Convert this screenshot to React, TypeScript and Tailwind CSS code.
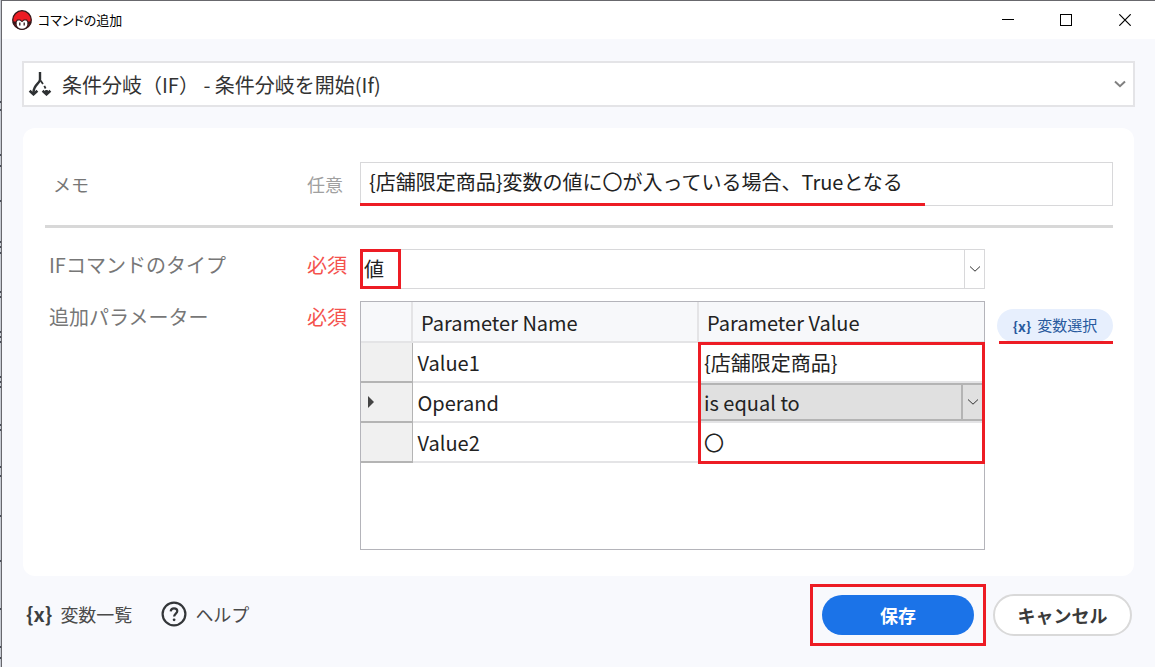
import type { ReactNode } from "react";

const parameters = [
  { name: "Value1", value: "{店舗限定商品}" },
  { name: "Operand", value: "is equal to", options: true },
  { name: "Value2", value: "〇" },
];

const edgeMarks = [101, 109, 154, 165, 200, 241, 246, 252, 291, 296, 331, 336, 341, 376, 381, 386, 424, 429, 466, 475, 515, 560, 608, 646, 657];

function Chevron({ className }: { className: string }) {
  return (
    <svg className={className} viewBox="0 0 12 8" fill="none" stroke="currentColor" aria-hidden="true">
      <path d="M1 1.5 6 6.2 11 1.5" />
    </svg>
  );
}

function Logo() {
  return (
    <svg className="h-5 w-5" viewBox="0 0 20 20" aria-hidden="true">
      <circle cx="10" cy="10" r="9.300" fill="#ed1c24" stroke="#33181a" strokeWidth="1.300" />
      <path d="M.7 11.500h3.100L5 9.600h3.300L10 11l1.700-1.400H15l1.200 1.900h3.100v1.600l-2.500 1.100C16 17.800 13.400 19.800 10 19.800S4 17.800 3.200 14.200L.7 13.100z" fill="#33181a" />
      <path d="M4.700 12 5.800 10.600h2.100L10 12.200l2.100-1.600h2.100L15.300 12v3c-.5 2.200-2.700 3.700-5.300 3.700S5.200 17.200 4.700 15z" fill="#fff" />
      <path d="M7.800 12.600v2.800M12.200 12.600v2.800" stroke="#33181a" strokeWidth="1.300" />
    </svg>
  );
}

function BranchIcon() {
  return (
    <svg className="h-6 w-6 shrink-0" viewBox="0 0 24 24" fill="none" stroke="#2e3133" strokeWidth="2" aria-hidden="true">
      <path d="M12 0v7.500C12 11.500 5.500 12.500 5.500 20.500" strokeWidth="2.400" />
      <path d="m12.500 8.500 2.500 3.500M16.300 13.800l1.300 2.700" strokeWidth="1.800" />
      <path d="M1.600 18.800 5.500 22.300l3.900-3.500M14.600 18.800l3.900 3.500 3.900-3.500M18.500 18v3.500" strokeWidth="2.600" />
    </svg>
  );
}

function Required({ children }: { children: ReactNode }) {
  return <span className="text-xl leading-8 text-[#f4524d]">{children}</span>;
}

export default function App() {
  return (
    <div className="relative flex min-h-screen bg-[#c6cad2] pl-px font-['Noto_Sans_CJK_JP',sans-serif] text-[#222]">
      <svg className="absolute top-0 left-0 h-full w-px" aria-hidden="true">
        {edgeMarks.map((y) => (
          <rect key={y} y={y} width="1" height="2" fill="#4a4f5a" />
        ))}
      </svg>
      <div className="flex min-w-0 flex-1 flex-col border-t border-l border-[#68686d] bg-[#f8f9fd]">
        <header className="flex h-[38px] items-center bg-white pl-2.5">
          <Logo />
          <h1 className="ml-1.5 flex-1 text-[13px] leading-5 text-black [font-feature-settings:'palt']">コマンドの追加</h1>
          <div className="flex text-black">
            <button type="button" aria-label="最小化" className="flex h-9 w-[58px] items-center justify-center">
              <svg className="h-3 w-3" viewBox="0 0 12 12" shapeRendering="crispEdges"><path d="M0 5.500h12" stroke="currentColor" /></svg>
            </button>
            <button type="button" aria-label="最大化" className="flex h-9 w-[58px] items-center justify-center">
              <svg className="h-3 w-3" viewBox="0 0 12 12" shapeRendering="crispEdges"><path d="M.5.500h11v11H.500z" fill="none" stroke="currentColor" /></svg>
            </button>
            <button type="button" aria-label="閉じる" className="flex h-9 w-[60px] items-center justify-center">
              <svg className="h-3 w-3" viewBox="0 0 12 12"><path d="m.3.300 11.400 11.400M11.700.300.300 11.700" stroke="currentColor" strokeWidth="1.200" /></svg>
            </button>
          </div>
        </header>

        <main className="flex flex-1 flex-col pt-[22px] pr-5 pl-5">
          <div className="relative flex h-[46px] items-center border-2 border-[#e4e4e7] bg-white pl-1">
            <BranchIcon />
            <select
              aria-label="コマンド"
              className="absolute inset-0 w-full appearance-none bg-transparent pt-0.5 pl-[38px] text-xl text-[#333] outline-none"
            >
              <option>条件分岐（IF） - 条件分岐を開始(If)</option>
            </select>
            <Chevron className="pointer-events-none absolute right-[7px] h-2 w-3 stroke-2 text-[#808080]" />
          </div>

          <section className="mx-px mt-[21px] rounded-xl bg-white pt-[34px] pr-[21px] pb-[26px] pl-[22px]">
            <div className="grid grid-cols-[262px_53px_minmax(0,1fr)] items-center">
              <label htmlFor="memo" className="pl-2 text-lg text-[#777]">メモ</label>
              <span className="text-lg text-[#a0a0a0]">任意</span>
              <div className="relative">
                <input
                  id="memo"
                  defaultValue="{店舗限定商品}変数の値に〇が入っている場合、Trueとなる"
                  className="block h-11 w-full border border-[#d8d8da] pb-1.5 pl-2 text-xl outline-none"
                />
                <span className="absolute bottom-0 left-0 h-[3px] w-3/4 bg-[#ed1c24]" />
              </div>
            </div>

            <hr className="mt-[19px] border-t-3 border-[#d8d8d8]" />

            <div className="mt-[21px] grid grid-cols-[262px_53px_minmax(0,1fr)_128px] gap-y-3">
              <label htmlFor="if-type" className="pl-1 text-xl leading-8 text-[#777]">IFコマンドのタイプ</label>
              <Required>必須</Required>
              <div className="relative flex h-10 items-center">
                <select
                  id="if-type"
                  className="h-full w-full appearance-none border border-[#d8d8da] bg-white pl-[3px] text-xl outline-none"
                >
                  <option>値</option>
                </select>
                <span className="pointer-events-none absolute inset-y-0 right-0 flex w-[21px] items-center justify-center border border-[#d8d8da]">
                  <Chevron className="h-2 w-3 text-[#333]" />
                </span>
                <span className="pointer-events-none absolute inset-y-0 left-0 w-[41px] border-3 border-[#ed1c24]" />
              </div>
              <span />

              <span className="pl-1 text-xl leading-8 text-[#777]">追加パラメーター</span>
              <Required>必須</Required>
              <div className="min-h-[249px] border border-[#b4b4ba] bg-white">
                <table className="w-full table-fixed border-collapse text-left text-xl">
                  <colgroup>
                    <col className="w-[51px]" />
                    <col />
                    <col />
                  </colgroup>
                  <thead>
                    <tr className="h-10 border-b-2 border-[#e4e4e6] bg-[#f7f8fa]">
                      <th className="border-r-2 border-[#e4e4e6]" />
                      <th className="border-r-2 border-[#e4e4e6] p-0 pt-0.5 pl-2 font-normal">Parameter Name</th>
                      <th className="p-0 pt-0.5 pl-2 font-normal">Parameter Value</th>
                    </tr>
                  </thead>
                  <tbody>
                    {parameters.map((row, i) => (
                      <tr key={row.name} className="h-10 border-b-2 border-[#e4e4e6]">
                        <td className="border-r border-b-2 border-[#b4b4b4] bg-[#f0f0f0] p-0 pl-1.5">
                          {row.options && (
                            <svg className="h-3 w-2" viewBox="0 0 8 12" aria-hidden="true">
                              <path d="M1 0v12l6-6z" fill="#444" />
                            </svg>
                          )}
                        </td>
                        <td className="p-0 pt-0.5 pl-[5px]">{row.name}</td>
                        <td className="relative p-0 pt-0.5 pl-1.5">
                          {row.options ? (
                            <div className="absolute inset-0">
                              <select
                                aria-label={row.name}
                                className="h-full w-full appearance-none border-y-2 border-[#b4b4b4] bg-[#e0e0e0] pt-0.5 pl-1.5 text-xl outline-none"
                              >
                                <option>{row.value}</option>
                              </select>
                              <span className="pointer-events-none absolute inset-y-0 right-0 flex w-[23px] items-center justify-center border-2 border-[#b4b4b4]">
                                <Chevron className="h-2 w-3 text-[#333]" />
                              </span>
                            </div>
                          ) : (
                            row.value
                          )}
                          {i === 0 && (
                            <span className="pointer-events-none absolute -top-px -right-px left-0 z-10 h-[122px] border-3 border-[#ed1c24]" />
                          )}
                        </td>
                      </tr>
                    ))}
                  </tbody>
                </table>
              </div>
              <div className="relative mt-2 ml-3 h-[35px]">
                <button
                  type="button"
                  className="flex h-[33px] w-full items-center justify-center gap-1.5 rounded-full bg-[#e7effd] text-[15px] text-[#285a9e]"
                >
                  <span className="text-sm font-bold">{"{x}"}</span>
                  変数選択
                </button>
                <span className="absolute right-0 bottom-0 left-0.5 h-[3px] bg-[#ed1c24]" />
              </div>
            </div>
          </section>

          <footer className="flex items-center pt-2 pr-[3px] pl-1 text-lg text-[#4a4a4a]">
            <button type="button" className="flex items-center gap-2 pb-0.5">
              <span className="text-xl font-bold text-[#3c3f41]">{"{x}"}</span>
              変数一覧
            </button>
            <button type="button" className="ml-[29px] flex items-center gap-2 pb-0.5">
              <svg className="h-[26px] w-[26px]" viewBox="0 0 26 26" fill="none" stroke="#333639" strokeWidth="2.200" aria-hidden="true">
                <circle cx="13" cy="13" r="11.400" />
                <path d="M9.700 10.300c.2-1.900 1.500-3 3.300-3s3.300 1.100 3.300 2.800c0 2.400-3.200 2.700-3.200 5.500" />
                <circle cx="13.100" cy="18.800" r="1.400" fill="#333639" stroke="none" />
              </svg>
              ヘルプ
            </button>
            <div className="ml-auto border-3 border-[#ed1c24] px-[9px] py-2">
              <button type="button" className="block h-10 w-[152px] rounded-full bg-[#1b73e8] font-bold text-white">保存</button>
            </div>
            <button type="button" className="ml-[7px] h-[42px] w-[139px] rounded-full border-2 border-[#d9d9d9] bg-white font-bold text-[#3a3a3a]">
              キャンセル
            </button>
          </footer>
        </main>
      </div>
    </div>
  );
}
